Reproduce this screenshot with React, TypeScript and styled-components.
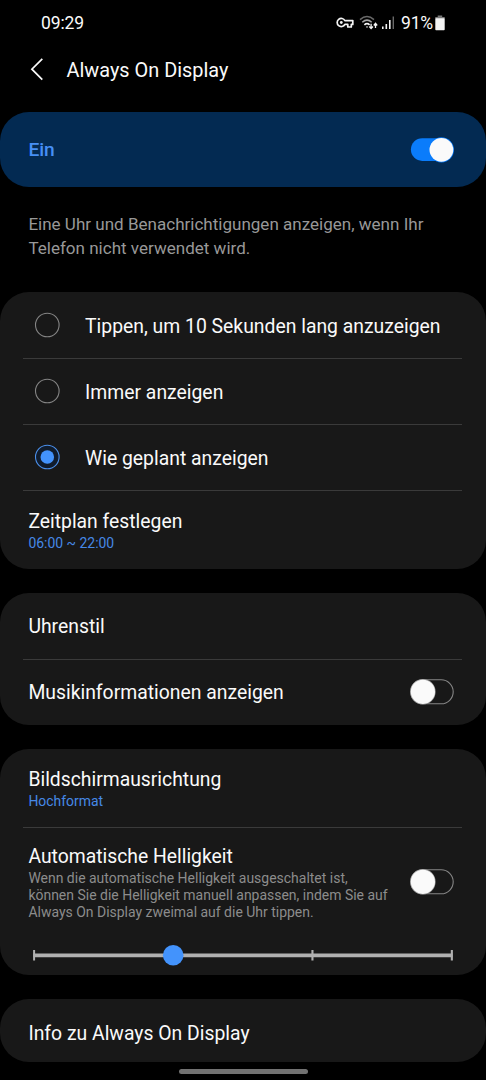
import React, { useState } from "react";
import styled, { createGlobalStyle } from "styled-components";

const GlobalStyle = createGlobalStyle`
  * { box-sizing: border-box; }
  body {
    margin: 0;
    background: #000;
    color: #fafafa;
    font-family: Roboto, "Liberation Sans", sans-serif;
  }
`;

const Screen = styled.main`
  width: 486px;
  height: 1080px;
  overflow: hidden;
  background: #000;
  display: flex;
  flex-direction: column;
`;

const StatusBar = styled.header`
  height: 46px;
  padding: 0 41px 0 41px;
  display: flex;
  align-items: center;
  justify-content: space-between;
  font-size: 17.5px;
  line-height: 20px;
`;

const Clock = styled.span`
  letter-spacing: -0.1px;
`;

const StatusIcons = styled.div`
  display: flex;
  align-items: center;
  svg { display: block; }
`;

const NetworkIcons = styled.div`
  display: flex;
  align-items: center;
  gap: 3px;
  margin-left: 5px;
`;

const Percent = styled.span`
  width: 34px;
  margin-left: 6px;
  letter-spacing: -0.2px;
`;

const TitleBar = styled.div`
  height: 66px;
  padding: 0 30px 18px;
  display: flex;
  align-items: center;
  gap: 22.5px;
`;

const BackButton = styled.button`
  width: 14px;
  height: 24px;
  padding: 0;
  border: 0;
  background: none;
  svg { display: block; }
`;

const Title = styled.h1`
  margin: 0;
  padding-top: 1px;
  font-size: 19.9px;
  line-height: 24px;
  font-weight: 400;
`;

const MasterCard = styled.section`
  height: 75px;
  padding: 0 32px 0 28.4px;
  border-radius: 29px;
  background: #032a52;
  display: flex;
  align-items: center;
  justify-content: space-between;
`;

const MasterLabel = styled.span`
  padding-top: 1px;
  color: #478ff5;
  font-size: 19.2px;
  line-height: 24px;
  font-weight: 500;
`;

const Description = styled.p`
  height: 105px;
  margin: 0;
  padding: 25px 20px 0 28.4px;
  color: #989898;
  font-size: 17.05px;
  line-height: 24px;
`;

const Cards = styled.div`
  display: flex;
  flex-direction: column;
  gap: 24px;
`;

const Card = styled.section`
  border-radius: 29px;
  background: #181818;
`;

const Divider = styled.hr`
  height: 1px;
  margin: 0 24px 0 23px;
  border: 0;
  background: #3a3a3a;
`;

const SwitchButton = styled.button`
  width: 45px;
  height: 26px;
  padding: 0;
  border: 0;
  background: none;
  svg { display: block; }
`;

const Row = styled.div<{ $height: number; $drop?: number }>`
  height: ${(p) => p.$height}px;
  padding: ${(p) => p.$drop ?? 0}px 32px 0 28.4px;
  display: flex;
  align-items: center;
  justify-content: space-between;
  ${SwitchButton} { margin-bottom: 2px; }
`;

const RadioRow = styled.label<{ $height: number }>`
  height: ${(p) => p.$height}px;
  padding: 0 20px 0 34px;
  display: flex;
  align-items: flex-start;
  gap: 25px;
  svg { display: block; }
`;

const RadioMark = styled.span<{ $top: number }>`
  padding-top: ${(p) => p.$top}px;
`;

const RadioLabel = styled.span<{ $top: number }>`
  padding-top: ${(p) => p.$top}px;
  font-size: 19.38px;
  line-height: 24px;
  white-space: nowrap;
`;

const Label = styled.span`
  padding-top: 1px;
  font-size: 19.36px;
  line-height: 24px;
  white-space: nowrap;
`;

const StackRow = styled.div<{ $height: number }>`
  height: ${(p) => p.$height}px;
  padding: 19px 28px 0 28.4px;
`;

const StackTitle = styled.div`
  font-size: 19.34px;
  line-height: 24px;
`;

const Value = styled.div`
  margin-top: -1px;
  color: #4688e6;
  font-size: 13.95px;
  line-height: 20px;
`;

const BrightnessRow = styled.div`
  height: 108px;
  padding: 17px 32px 0 28.4px;
  display: flex;
  justify-content: space-between;
`;

const Hint = styled.p`
  margin: 1px 0 0;
  color: #8c8c8c;
  font-size: 13.97px;
  line-height: 17px;
  white-space: nowrap;
`;

const SwitchSlot = styled.div`
  padding-top: 23.5px;
`;

const SliderArea = styled.div`
  height: 39px;
  padding: 7px 32px 0 32px;
  svg { display: block; }
`;

const NavBar = styled.div`
  width: 129px;
  height: 5px;
  margin: 7px 0 0 178.5px;
  border-radius: 3px;
  background: #727272;
`;

function KeyIcon() {
  return (
    <svg width="18" height="12" viewBox="0 0 18 12" fill="none">
      <path d="M8.9 3.6H16.8V7.4H15.3V10H11.8V7.4H8.9A4.1 4.1 0 1 1 8.9 3.6Z" stroke="#f4f4f4" strokeWidth="1.7" strokeLinejoin="round" />
      <circle cx="5.3" cy="5.5" r="1.4" fill="#f4f4f4" />
    </svg>
  );
}

function WifiIcon() {
  return (
    <svg width="20" height="16" viewBox="0 0 20 16" fill="none">
      <path d="M1 4.6Q8 -1.6 15 4.6" stroke="#686868" strokeWidth="1.5" />
      <path d="M3.3 7.3Q8 3 12.7 7.3" stroke="#a5a5a5" strokeWidth="1.5" />
      <path d="M5.4 9.8Q8 7.4 10.6 9.8" stroke="#f4f4f4" strokeWidth="1.7" />
      <path d="M6.8 11.5H9.2L8 13Z" fill="#f4f4f4" />
      <path d="M12.1 8.7V13.4M10.3 11.5L12.1 13.6L13.9 11.5M16.5 13V8.7M14.8 10.5L16.5 8.4L18.2 10.5" stroke="#f4f4f4" strokeWidth="1.3" />
    </svg>
  );
}

function SignalIcon() {
  return (
    <svg width="13" height="14" viewBox="0 0 13 14">
      <path d="M0 10.5H1.6V13H0ZM3.5 8H5.1V13H3.5ZM7 4H8.6V13H7Z" fill="#f4f4f4" />
      <path d="M10.6 0.5H12V13H10.6Z" fill="#686868" />
    </svg>
  );
}

function BatteryIcon() {
  return (
    <svg width="10" height="16" viewBox="0 0 10 16">
      <path d="M2.7 0.5H7.2V2H9.7V4H0.3V2H2.7Z" fill="#777" />
      <rect x="0.3" y="3.3" width="9.4" height="12" rx="0.8" fill="#f4f4f4" />
    </svg>
  );
}

function Radio({ checked }: { checked: boolean }) {
  return (
    <svg width="26" height="26" viewBox="0 0 26 26">
      <circle cx="13.3" cy="13" r="11.8" fill={checked ? "#101c2d" : "none"} stroke={checked ? "#4b8fea" : "#858585"} strokeWidth="1.1" />
      {checked && <circle cx="13.3" cy="13" r="6.8" fill="#4393fc" />}
    </svg>
  );
}

function Switch({ initial = false, label }: { initial?: boolean; label: string }) {
  const [on, setOn] = useState(initial);
  return (
    <SwitchButton role="switch" aria-checked={on} aria-label={label} onClick={() => setOn(!on)}>
      <svg width="45" height="26" viewBox="0 0 45 26">
        {on ? (
          <>
            <rect x="1.9" y="1.3" width="42.6" height="22.6" rx="11.3" fill="#0a7cfb" />
            <circle cx="32.4" cy="12.8" r="12.6" fill="#0a7cfb" />
            <circle cx="32.4" cy="12.8" r="11.9" fill="#fafafa" />
          </>
        ) : (
          <>
            <rect x="1.6" y="0.8" width="42.6" height="24" rx="12" fill="none" stroke="#858585" strokeWidth="1.1" />
            <circle cx="13.9" cy="12.8" r="12.7" fill="#a0a0a0" />
            <circle cx="13.9" cy="12.8" r="12.1" fill="#fafafa" />
          </>
        )}
      </svg>
    </SwitchButton>
  );
}

function Slider() {
  return (
    <svg width="422" height="24" viewBox="0 0 422 24">
      <path d="M1.3 10.4H420.5V14.3H1.3Z" fill="#b0b0b0" />
      <path d="M1.1 7H3.1V17.6H1.1ZM279.4 7H281.5V17.6H279.4ZM418.8 7H420.9V17.6H418.8Z" fill="#b0b0b0" />
      <circle cx="141.2" cy="12.3" r="10.3" fill="#4393fc" />
    </svg>
  );
}

const modes = [
  { text: "Tippen, um 10 Sekunden lang anzuzeigen", height: 66, top: 23 },
  { text: "Immer anzeigen", height: 65, top: 22 },
  { text: "Wie geplant anzeigen", height: 65, top: 22 },
];

export default function App() {
  return (
    <>
      <GlobalStyle />
      <Screen>
        <StatusBar>
          <Clock>09:29</Clock>
          <StatusIcons>
            <KeyIcon />
            <NetworkIcons>
              <WifiIcon />
              <SignalIcon />
            </NetworkIcons>
            <Percent>91%</Percent>
            <BatteryIcon />
          </StatusIcons>
        </StatusBar>
        <TitleBar>
          <BackButton aria-label="Zurück">
            <svg width="14" height="24" viewBox="0 0 14 24" fill="none">
              <path d="M12.3 0.9L1.9 11.2L12.3 21.6" stroke="#fafafa" strokeWidth="1.7" />
            </svg>
          </BackButton>
          <Title>Always On Display</Title>
        </TitleBar>
        <MasterCard>
          <MasterLabel>Ein</MasterLabel>
          <Switch initial label="Always On Display" />
        </MasterCard>
        <Description>
          Eine Uhr und Benachrichtigungen anzeigen, wenn Ihr
          <br />
          Telefon nicht verwendet wird.
        </Description>
        <Cards>
          <Card>
            {modes.map((mode, i) => (
              <React.Fragment key={mode.text}>
                <RadioRow $height={mode.height}>
                  <RadioMark $top={mode.top - 3}>
                    <Radio checked={i === 2} />
                  </RadioMark>
                  <RadioLabel $top={mode.top}>{mode.text}</RadioLabel>
                </RadioRow>
                <Divider />
              </React.Fragment>
            ))}
            <StackRow $height={78}>
              <StackTitle>Zeitplan festlegen</StackTitle>
              <Value>06:00 ~ 22:00</Value>
            </StackRow>
          </Card>
          <Card>
            <Row $height={66}>
              <Label>Uhrenstil</Label>
            </Row>
            <Divider />
            <Row $height={65}>
              <Label>Musikinformationen anzeigen</Label>
              <Switch label="Musikinformationen anzeigen" />
            </Row>
          </Card>
          <Card>
            <StackRow $height={78}>
              <StackTitle>Bildschirmausrichtung</StackTitle>
              <Value>Hochformat</Value>
            </StackRow>
            <Divider />
            <BrightnessRow>
              <div>
                <StackTitle>Automatische Helligkeit</StackTitle>
                <Hint>
                  Wenn die automatische Helligkeit ausgeschaltet ist,
                  <br />
                  können Sie die Helligkeit manuell anpassen, indem Sie auf
                  <br />
                  Always On Display zweimal auf die Uhr tippen.
                </Hint>
              </div>
              <SwitchSlot>
                <Switch label="Automatische Helligkeit" />
              </SwitchSlot>
            </BrightnessRow>
            <SliderArea>
              <Slider />
            </SliderArea>
          </Card>
          <Card>
            <Row $height={63} $drop={5}>
              <Label>Info zu Always On Display</Label>
            </Row>
          </Card>
        </Cards>
        <NavBar />
      </Screen>
    </>
  );
}
